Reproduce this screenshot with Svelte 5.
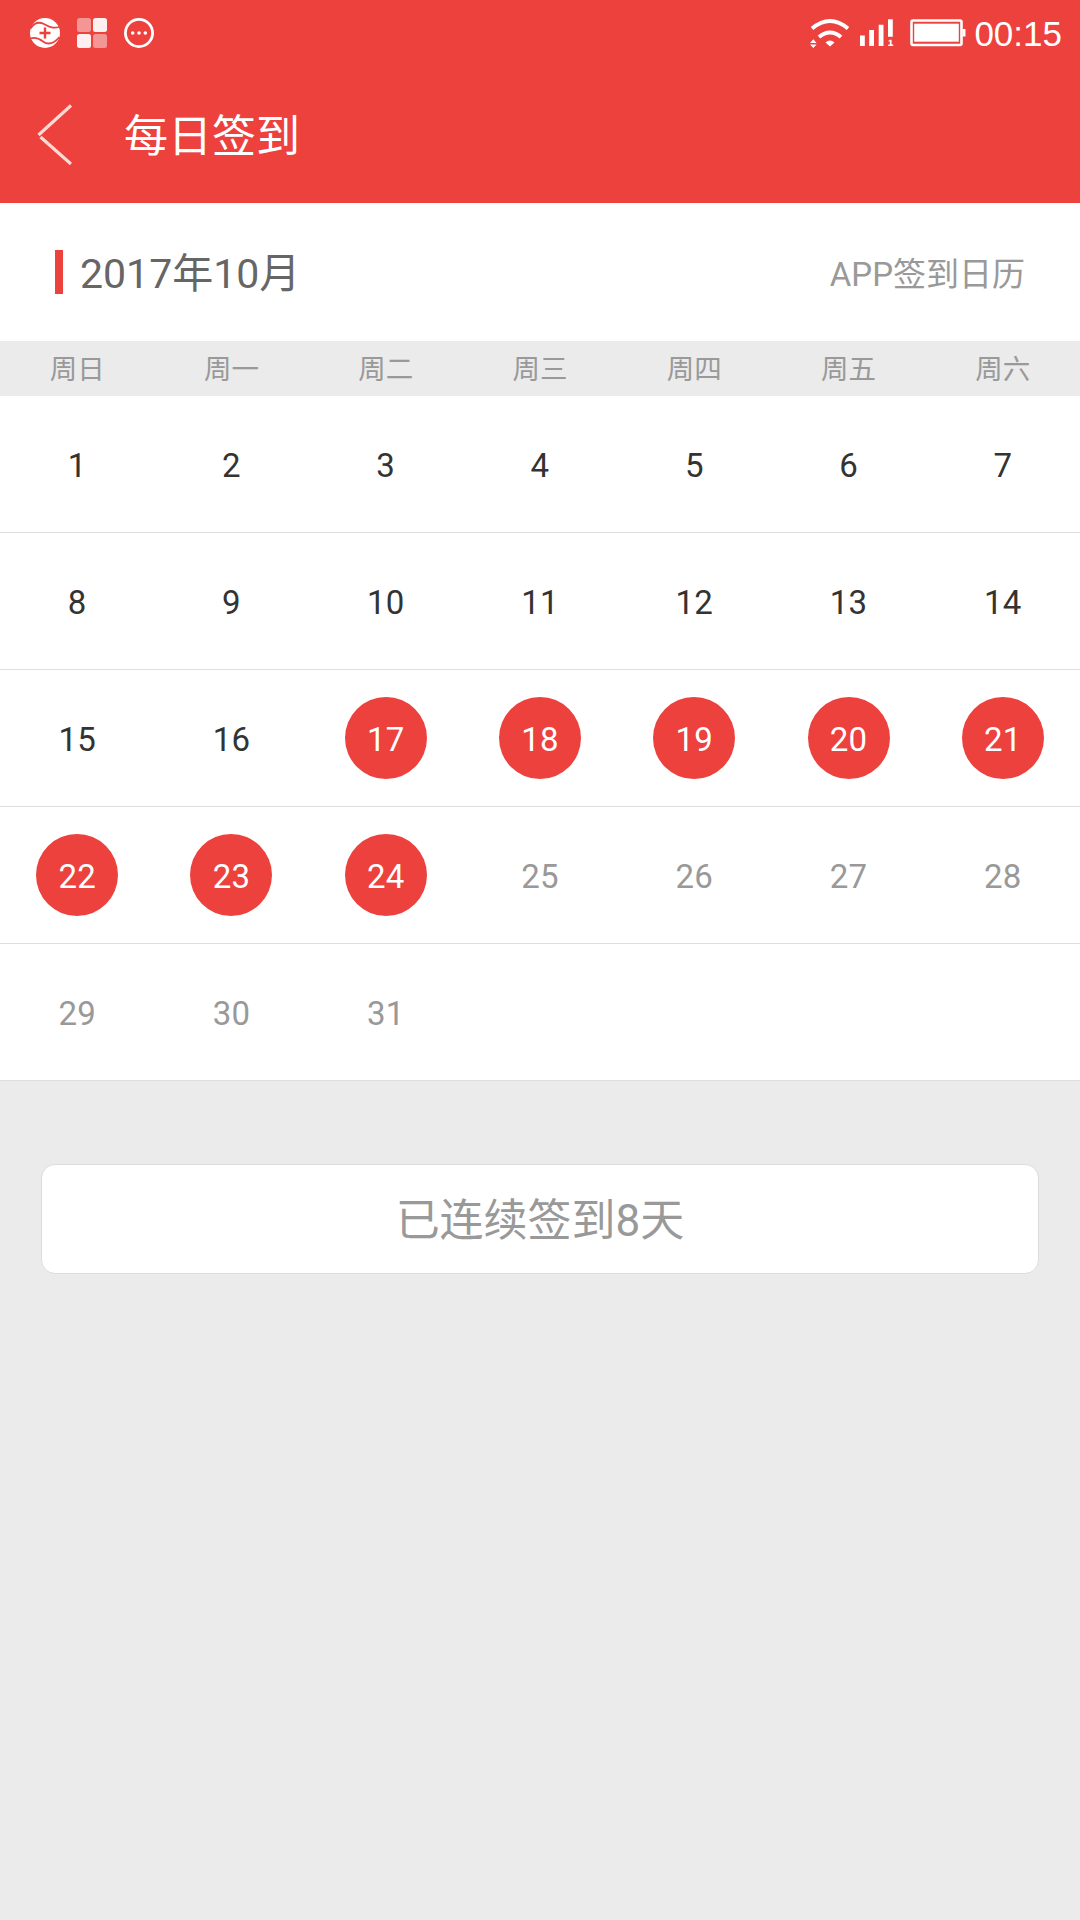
<script lang="ts">
  const WEEKDAYS = ["周日", "周一", "周二", "周三", "周四", "周五", "周六"];

  let today = $state(24);
  let streak = $state(8);

  let firstSigned = $derived(today - streak + 1);

  // five full weeks, 0 marks an empty cell
  const weeks = Array.from({ length: 5 }, (_, w) =>
    Array.from({ length: 7 }, (_, d) => {
      const day = w * 7 + d + 1;
      return day <= 31 ? day : 0;
    })
  );
</script>

<div class="page">
  <header>
    <div class="status-bar">
      <div class="status-left">
        <svg width="30" height="30" viewBox="0 0 30 30">
          <circle cx="15" cy="15" r="15" fill="#fff" />
          <path d="M.5 10.500C4 5 9 3.500 14 6S22 11 29.500 9" fill="none" stroke="#ec413d" stroke-width="1.800" />
          <path d="M.5 20.500C5 19 9 20.500 13 23.500S23 26.500 29.500 19" fill="none" stroke="#ec413d" stroke-width="1.800" />
          <path d="M15 9.500v11M9.500 15h11" stroke="#ec413d" stroke-width="2.400" />
        </svg>
        <svg width="30" height="30" viewBox="0 0 30 30" fill="#fff">
          <rect width="14" height="14" rx="2.500" opacity=".45" />
          <rect x="16" width="14" height="14" rx="2.500" opacity=".92" />
          <rect y="16" width="14" height="14" rx="2.500" opacity=".92" />
          <rect x="16" y="16" width="14" height="14" rx="2.500" opacity=".45" />
        </svg>
        <svg width="30" height="30" viewBox="0 0 30 30" fill="#fff">
          <circle cx="15" cy="15" r="13.600" fill="none" stroke="#fff" stroke-width="2.800" />
          <circle cx="8.700" cy="15" r="1.800" />
          <circle cx="15" cy="15" r="1.800" />
          <circle cx="21.300" cy="15" r="1.800" />
        </svg>
      </div>
      <div class="status-right">
        <svg class="wifi" width="40" height="30" viewBox="0 0 40 30">
          <path d="M2 10.500Q20-4.500 38 10.500" fill="none" stroke="#fff" stroke-width="4" />
          <path d="M9 19Q20 10 31 19" fill="none" stroke="#fff" stroke-width="4" />
          <path d="M15.500 24.500Q20 20.500 24.500 24.500L20 28.500zM0 25l3.300-3.700L6.600 25zM0 26.500l3.300 3.500 3.300-3.500z" fill="#fff" />
        </svg>
        <svg class="signal" width="34" height="30" viewBox="0 0 34 30" fill="#fff">
          <path d="M0 17.500h4.800V28H0zM9.200 12H14v16H9.200zM18.700 6.700h4.800V28h-4.800zM28 1.300h4.800v17.500H28z" />
          <path d="M27.800 23.200l2.200-1.400h1.600v4.700h1.600V28h-5v-1.500h1.700v-2.900z" />
        </svg>
        <svg class="battery" width="56" height="28" viewBox="0 0 56 28">
          <rect x="1.500" y="1.500" width="50" height="24.500" rx="1.500" fill="none" stroke="#fff" stroke-width="2.600" />
          <rect x="4.200" y="4.700" width="44.600" height="18" fill="#fff" />
          <path d="M52.500 10h3v7.500h-3z" fill="#fff" />
        </svg>
        <span class="time">00:15</span>
      </div>
    </div>
    <div class="nav">
      <svg class="back" width="36" height="62" viewBox="0 0 36 62">
        <path d="M35 1.500L2.500 31M4.500 33L35 60" fill="none" stroke="#fdd9d3" stroke-width="3.200" />
      </svg>
      <h1>每日签到</h1>
    </div>
  </header>

  <section class="month">
    <span class="marker"></span>
    <h2>2017年10月</h2>
    <span class="caption">APP签到日历</span>
  </section>

  <div class="weekdays">
    {#each WEEKDAYS as name}
      <span>{name}</span>
    {/each}
  </div>

  <div class="calendar">
    {#each weeks as week}
      <div class="week">
        {#each week as day}
          <div class="cell">
            {#if day}
              <span
                class="day"
                class:signed={day >= firstSigned && day <= today}
                class:future={day > today}
              >{day}</span>
            {/if}
          </div>
        {/each}
      </div>
    {/each}
  </div>

  <button>已连续签到{streak}天</button>
</div>

<style>
  :global(body) {
    margin: 0;
    background: #ebebeb;
  }

  .page {
    width: 1080px;
    height: 1920px;
    overflow: hidden;
    background: #ebebeb;
    font-family: Roboto, "Noto Sans CJK SC", sans-serif;
  }

  header {
    height: 203px;
    background: #ec413d;
    color: #fff;
  }

  .status-bar {
    height: 66px;
    display: flex;
    justify-content: space-between;
    align-items: center;
    padding: 0 18px 0 30px;
  }

  .status-left {
    display: flex;
    gap: 17px;
  }

  .status-right {
    display: flex;
    align-items: center;
  }

  .signal {
    margin-left: 10px;
  }

  .battery {
    margin-left: 16px;
  }

  .time {
    margin-left: 8px;
    font-family: "Liberation Sans", sans-serif;
    font-size: 35px;
    line-height: 40px;
    padding-top: 2px;
  }

  .nav {
    height: 137px;
    display: flex;
    align-items: center;
    padding-left: 36px;
  }

  h1 {
    margin: 0 0 0 52px;
    padding-bottom: 4px;
    font-size: 44px;
    font-weight: 400;
  }

  .month {
    height: 138px;
    display: flex;
    align-items: center;
    padding: 0 55px;
    background: #fff;
  }

  .marker {
    width: 8px;
    height: 44px;
    background: #ec413d;
  }

  h2 {
    margin: 0 0 0 17px;
    padding-bottom: 4px;
    font-size: 41px;
    font-weight: 400;
    color: #666;
  }

  .caption {
    margin-left: auto;
    padding-bottom: 1px;
    font-size: 33px;
    color: #999;
  }

  .weekdays {
    height: 55px;
    box-sizing: border-box;
    display: grid;
    grid-template-columns: repeat(7, 1fr);
    align-items: center;
    padding-bottom: 3px;
    text-align: center;
    font-size: 27.5px;
    color: #999;
  }

  .calendar {
    background: #fff;
  }

  .week {
    height: 137px;
    box-sizing: border-box;
    display: grid;
    grid-template-columns: repeat(7, 1fr);
    border-bottom: 1px solid #dedede;
  }

  .cell {
    display: flex;
    align-items: center;
    justify-content: center;
  }

  .day {
    width: 82px;
    height: 82px;
    border-radius: 50%;
    font-size: 33px;
    line-height: 86px;
    letter-spacing: 0.2px;
    text-align: center;
    color: #333;
  }

  .day.future {
    color: #999;
  }

  .day.signed {
    background: #ec413d;
    color: #fff;
  }

  button {
    display: block;
    width: 998px;
    height: 110px;
    margin: 83px auto 0;
    padding: 0 0 4px;
    border: 1px solid #ddd;
    border-radius: 14px;
    background: #fff;
    font: inherit;
    font-size: 44px;
    color: #999;
  }
</style>
